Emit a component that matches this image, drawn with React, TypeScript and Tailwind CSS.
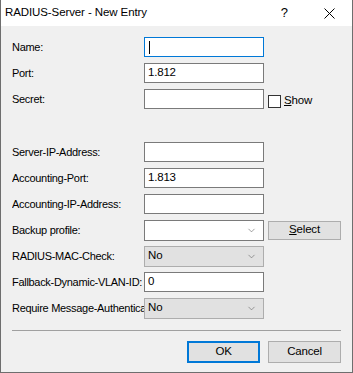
import { ChevronDown } from "lucide-react";

const font = { fontFamily: '"Liberation Sans", Arial, sans-serif' };

function TextBox({ value = "", focused = false }: { value?: string; focused?: boolean }) {
  return (
    <div
      className={`flex h-[20px] w-[120px] items-center bg-white pl-[3px] text-[11.5px] tracking-[-0.2px] text-black ${
        focused ? "border border-[#0078d7]" : "border border-[#7a7a7a]"
      }`}
    >
      {focused ? <span className="ml-[1px] h-[13px] w-px bg-black" /> : value}
    </div>
  );
}

function Combo({ value = "", disabled = false }: { value?: string; disabled?: boolean }) {
  return (
    <div
      className={`flex h-[21px] w-[120px] items-center justify-between pl-[3px] pr-[6px] text-[11.5px] text-black ${
        disabled ? "border border-[#adadad] bg-[#e1e1e1]" : "border border-[#7a7a7a] bg-white"
      }`}
    >
      <span>{value}</span>
      <ChevronDown size={11} strokeWidth={1.3} className="text-[#606060]" />
    </div>
  );
}

function Row({ label, children }: { label: string; children: React.ReactNode }) {
  return (
    <div className="flex h-[20px] items-center">
      <div className="w-[132px] shrink-0 overflow-hidden whitespace-nowrap text-[11px] tracking-[-0.3px] text-black">
        {label}
      </div>
      {children}
    </div>
  );
}

function Button({ children, primary = false, className = "" }: { children: React.ReactNode; primary?: boolean; className?: string }) {
  return (
    <div
      className={`flex w-[73px] items-center justify-center bg-[#e1e1e1] text-[11.5px] tracking-[-0.2px] text-black ${
        primary ? "border-2 border-[#0078d7]" : "border border-[#adadad]"
      } ${className}`}
    >
      {children}
    </div>
  );
}

export default function App() {
  return (
    <div className="flex h-[373px] w-[353px] flex-col border-x border-b border-[#6e6e6e] bg-[#f0f0f0]" style={font}>
      <div className="flex h-[26px] shrink-0 items-center bg-white pl-[4px] text-[11.5px] tracking-[-0.1px] text-black">
        <span className="flex-1">RADIUS-Server - New Entry</span>
        <span className="mr-[36px] text-[13px]">?</span>
        <svg width="11" height="11" viewBox="0 0 11 11" className="mr-[17px]">
          <path d="M0.5 0.5 L10.5 10.5 M10.5 0.5 L0.5 10.5" stroke="#000" strokeWidth="1" />
        </svg>
      </div>

      <div className="flex flex-col pl-[11px] pt-[11px]">
        <div className="flex flex-col gap-[6px]">
          <Row label="Name:">
            <TextBox focused />
          </Row>
          <Row label="Port:">
            <TextBox value="1.812" />
          </Row>
          <Row label="Secret:">
            <TextBox />
            <div className="ml-[4px] mt-[4px] h-[13px] w-[13px] border border-[#333] bg-white" />
            <span className="ml-[3px] mt-[4px] text-[11.5px] tracking-[-0.2px] text-black">
              <u>S</u>how
            </span>
          </Row>
        </div>

        <div className="mt-[33px] flex flex-col gap-[6px]">
          <Row label="Server-IP-Address:">
            <TextBox />
          </Row>
          <Row label="Accounting-Port:">
            <TextBox value="1.813" />
          </Row>
          <Row label="Accounting-IP-Address:">
            <TextBox />
          </Row>
          <Row label="Backup profile:">
            <Combo />
            <Button className="ml-[4px] h-[19px]">
              <span>
                <u>S</u>elect
              </span>
            </Button>
          </Row>
          <Row label="RADIUS-MAC-Check:">
            <Combo value="No" disabled />
          </Row>
          <Row label="Fallback-Dynamic-VLAN-ID:">
            <TextBox value="0" />
          </Row>
          <Row label="Require Message-Authenticator:">
            <Combo value="No" disabled />
          </Row>
        </div>
      </div>

      <div className="mx-[11px] mt-[12px] h-px bg-[#a0a0a0]" />

      <div className="mt-[10px] flex justify-end gap-[8px] pr-[11px]">
        <Button primary className="h-[22px]">OK</Button>
        <Button className="h-[22px]">Cancel</Button>
      </div>
    </div>
  );
}
